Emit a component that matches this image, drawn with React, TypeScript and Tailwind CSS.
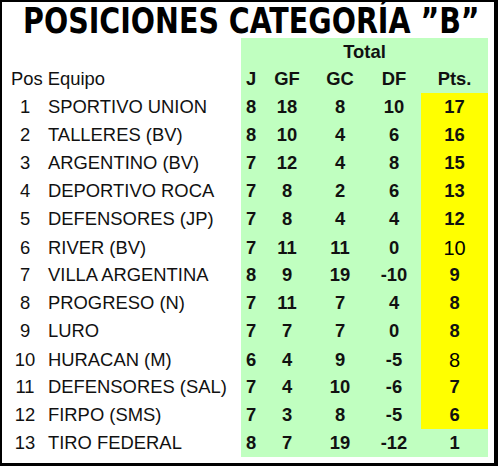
import React from "react";

type Row = [number, string, number, number, number, number, number];

const rows: Row[] = [
  [1, "SPORTIVO UNION", 8, 18, 8, 10, 17],
  [2, "TALLERES (BV)", 8, 10, 4, 6, 16],
  [3, "ARGENTINO (BV)", 7, 12, 4, 8, 15],
  [4, "DEPORTIVO ROCA", 7, 8, 2, 6, 13],
  [5, "DEFENSORES (JP)", 7, 8, 4, 4, 12],
  [6, "RIVER (BV)", 7, 11, 11, 0, 10],
  [7, "VILLA ARGENTINA", 8, 9, 19, -10, 9],
  [8, "PROGRESO (N)", 7, 11, 7, 4, 8],
  [9, "LURO", 7, 7, 7, 0, 8],
  [10, "HURACAN (M)", 6, 4, 9, -5, 8],
  [11, "DEFENSORES (SAL)", 7, 4, 10, -6, 7],
  [12, "FIRPO (SMS)", 7, 3, 8, -5, 6],
  [13, "TIRO FEDERAL", 8, 7, 19, -12, 1],
];

const cols = "grid grid-cols-[46px_193px_20px_52px_54px_54px_67px]";

// a few points cells are typed in plain weight, slightly bigger
const plainPts = [6, 10];

export default function App() {
  return (
    <div className="w-[498px] h-[466px] bg-white border-l-2 border-t-2 border-r-4 border-b-[3px] border-black overflow-hidden font-['Liberation_Sans',Arial,sans-serif] text-[18.4px] text-[#111]">
      <div className="h-[36px] flex items-center justify-center pl-[6px] pt-[2px]">
        <h1 className="whitespace-nowrap scale-x-[0.88] font-['DejaVu_Sans_Condensed','DejaVu_Sans',sans-serif] font-bold text-[36px] leading-none text-black">
          POSICIONES CATEGORÍA ”B”
        </h1>
      </div>

      <div className={`${cols} h-[27px]`}>
        <div className="col-span-2" />
        <div className="col-span-5 bg-[#c0ffc0] flex items-center justify-center font-bold">Total</div>
      </div>

      <div className={`${cols} h-[28px]`}>
        <div className="col-span-2 flex items-center pl-[9px]">Pos Equipo</div>
        <div className="bg-[#c0ffc0] flex items-center justify-center font-bold">J</div>
        <div className="bg-[#c0ffc0] flex items-center justify-center font-bold">GF</div>
        <div className="bg-[#c0ffc0] flex items-center justify-center font-bold">GC</div>
        <div className="bg-[#c0ffc0] flex items-center justify-center font-bold">DF</div>
        <div className="bg-[#c0ffc0] flex items-center justify-center font-bold">Pts.</div>
      </div>

      {rows.map(([pos, team, j, gf, gc, df, pts]) => (
        <div key={pos} className={`${cols} h-[28px]`}>
          <div className="flex items-center justify-center">{pos}</div>
          <div className="flex items-center whitespace-nowrap">{team}</div>
          <div className="bg-[#c0ffc0] flex items-center justify-center font-bold">{j}</div>
          <div className="bg-[#c0ffc0] flex items-center justify-center font-bold">{gf}</div>
          <div className="bg-[#c0ffc0] flex items-center justify-center font-bold">{gc}</div>
          <div className="bg-[#c0ffc0] flex items-center justify-center font-bold">{df}</div>
          <div
            className={`${pos <= 12 ? "bg-[#ffff00]" : "bg-[#c0ffc0]"} flex items-center justify-center ${
              plainPts.includes(pos) ? "text-[20px] text-black" : "font-bold"
            }`}
          >
            {pts}
          </div>
        </div>
      ))}
    </div>
  );
}
